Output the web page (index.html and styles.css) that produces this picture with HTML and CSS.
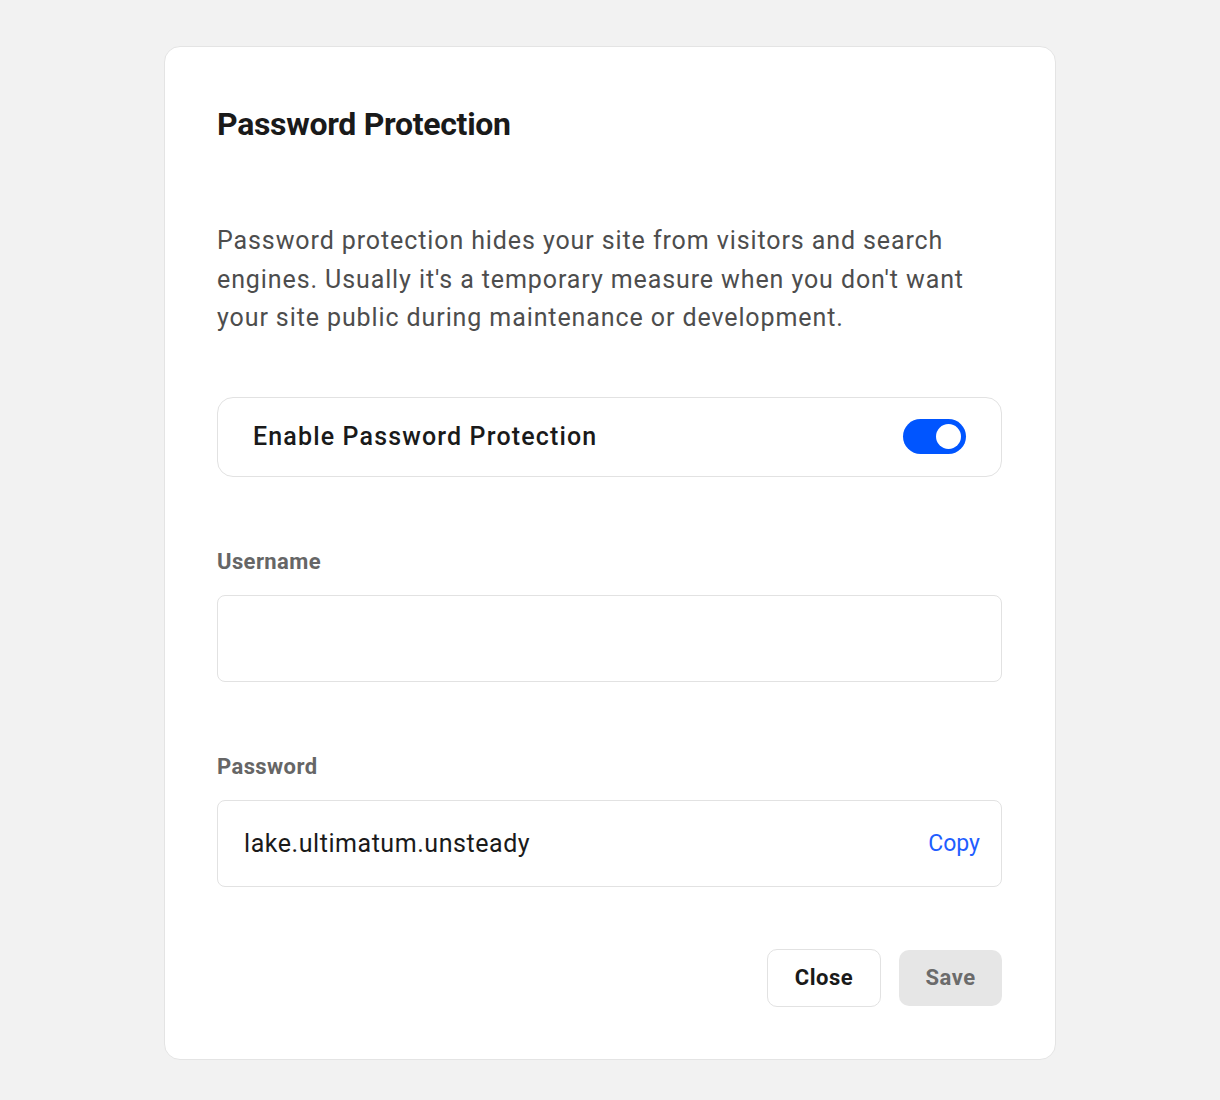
FILE: index.html
```html
<!DOCTYPE html>
<html>
<head>
<meta charset="utf-8">
<link rel="stylesheet" href="styles.css">
</head>
<body>
<div class="card">
  <h1 class="title">Password Protection</h1>
  <p class="desc">Password protection hides your site from visitors and search engines. Usually it's a temporary measure when you don't want your site public during maintenance or development.</p>
  <div class="toggle-row">
    <span class="toggle-label">Enable Password Protection</span>
    <span class="switch"><span class="knob"></span></span>
  </div>
  <div class="field">
    <div class="label">Username</div>
    <div class="input"></div>
  </div>
  <div class="field">
    <div class="label">Password</div>
    <div class="input">
      <span class="value">lake.ultimatum.unsteady</span>
      <span class="copy">Copy</span>
    </div>
  </div>
  <div class="actions">
    <button class="btn btn-close">Close</button>
    <button class="btn btn-save">Save</button>
  </div>
</div>
</body>
</html>
```
FILE: styles.css
```css
* { box-sizing: border-box; }
html, body { margin: 0; padding: 0; }
body {
  background: #f2f2f2;
  font-family: Roboto, "Liberation Sans", sans-serif;
  padding-top: 46px;
  height: 1100px;
}
.card {
  width: 892px;
  margin: 0 auto;
  background: #fff;
  border: 1px solid #e4e4e4;
  border-radius: 16px;
  padding: 53px 53px 52px 52px;
}
.title {
  margin: 0;
  font-size: 32px;
  line-height: 48px;
  font-weight: 700;
  color: #1a1a1a;
  letter-spacing: -0.3px;
}
.desc {
  margin: 74px 0 0 0;
  font-size: 25px;
  line-height: 38.5px;
  color: #4d4d4d;
  letter-spacing: 0.9px;
}
.toggle-row {
  margin-top: 59px;
  height: 80px;
  border: 1px solid #e2e2e2;
  border-radius: 16px;
  display: flex;
  align-items: center;
  justify-content: space-between;
  padding: 0 35px 0 35px;
}
.toggle-label {
  font-size: 25px;
  font-weight: 500;
  color: #1a1a1a;
  letter-spacing: 1.15px;
}
.switch {
  width: 63px;
  height: 35px;
  border-radius: 18px;
  background: #0055ff;
  position: relative;
  display: block;
}
.knob {
  position: absolute;
  right: 5px;
  top: 5px;
  width: 25px;
  height: 25px;
  border-radius: 50%;
  background: #fff;
}
.field { margin-top: 68px; }
.label {
  font-size: 22px;
  line-height: 33px;
  font-weight: 700;
  color: #666;
  margin-bottom: 17px;
  letter-spacing: 0.4px;
}
.input {
  height: 87px;
  border: 1px solid #e2e2e2;
  border-radius: 8px;
  display: flex;
  align-items: center;
  justify-content: space-between;
  padding: 0 21px 0 26px;
}
.value {
  font-size: 25px;
  color: #1a1a1a;
  letter-spacing: 0.55px;
}
.copy {
  font-size: 23px;
  color: #1f5eff;
}
.actions {
  margin-top: 62px;
  display: flex;
  justify-content: flex-end;
  align-items: center;
  gap: 18px;
}
.btn {
  font-family: Roboto, "Liberation Sans", sans-serif;
  font-size: 22px;
  font-weight: 700;
  border-radius: 10px;
  cursor: pointer;
  letter-spacing: 0.5px;
}
.btn-close {
  height: 58px;
  width: 114px;
  background: #fff;
  border: 1px solid #e2e2e2;
  color: #1a1a1a;
}
.btn-save {
  height: 56px;
  width: 103px;
  background: #e6e6e6;
  border: none;
  color: #6b6b6b;
}
```
